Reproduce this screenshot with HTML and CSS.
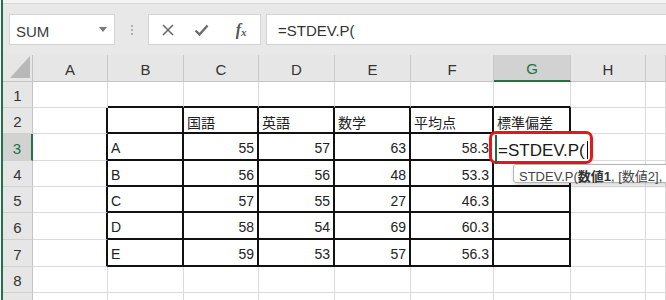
FILE: index.html
```html
<!DOCTYPE html>
<html lang="ja">
<head>
<meta charset="UTF-8">
<title>STDEV.P</title>
<link rel="stylesheet" href="styles.css">
</head>
<body>
<div class="app">
  <div class="ribbon-edge"></div>
  <div class="toolbar">
    <div class="namebox">
      <span>SUM</span>
      <svg class="drop" width="8" height="5" viewBox="0 0 8 5"><polygon points="0,0 8,0 4,5" fill="#7a7a7a"/></svg>
    </div>
    <div class="grip"><i></i><i></i><i></i></div>
    <div class="buttons">
      <span class="btn">
        <svg width="12" height="12" viewBox="0 0 12 12"><path d="M1 1 L11 11 M11 1 L1 11" stroke="#6b6b6b" stroke-width="1.6"/></svg>
      </span>
      <span class="btn">
        <svg width="15" height="12" viewBox="0 0 15 12"><path d="M1.5 6.5 L5.5 10.5 L13.5 1.5" stroke="#6b6b6b" stroke-width="2.4" fill="none"/></svg>
      </span>
      <span class="btn fx"><i>f</i><i class="sub">x</i></span>
    </div>
    <div class="formula">=STDEV.P(</div>
  </div>

  <div class="sheet">
    <div class="corner"><svg width="20" height="22" viewBox="0 0 20 22"><polygon points="20,0 20,22 0,22" fill="#b8b8b8"/></svg></div>
    <div class="ch">A</div><div class="ch">B</div><div class="ch">C</div><div class="ch">D</div><div class="ch">E</div><div class="ch">F</div><div class="ch sel">G</div><div class="ch">H</div><div class="ch"></div>

    <div class="rh">1</div>
    <div class="c"></div><div class="c tt"></div><div class="c tt"></div><div class="c tt"></div><div class="c tt"></div><div class="c tt"></div><div class="c tt"></div><div class="c"></div><div class="c"></div>

    <div class="rh">2</div>
    <div class="c tl"></div><div class="c tb"></div><div class="c tb">国語</div><div class="c tb">英語</div><div class="c tb">数学</div><div class="c tb">平均点</div><div class="c tb">標準偏差</div><div class="c"></div><div class="c"></div>

    <div class="rh sel">3</div>
    <div class="c tl"></div><div class="c tb">A</div><div class="c tb n">55</div><div class="c tb n">57</div><div class="c tb n">63</div><div class="c tb n">58.3</div><div class="c tb"></div><div class="c"></div><div class="c"></div>

    <div class="rh">4</div>
    <div class="c tl"></div><div class="c tb">B</div><div class="c tb n">56</div><div class="c tb n">56</div><div class="c tb n">48</div><div class="c tb n">53.3</div><div class="c tb"></div><div class="c"></div><div class="c"></div>

    <div class="rh">5</div>
    <div class="c tl"></div><div class="c tb">C</div><div class="c tb n">57</div><div class="c tb n">55</div><div class="c tb n">27</div><div class="c tb n">46.3</div><div class="c tb"></div><div class="c"></div><div class="c"></div>

    <div class="rh">6</div>
    <div class="c tl"></div><div class="c tb">D</div><div class="c tb n">58</div><div class="c tb n">54</div><div class="c tb n">69</div><div class="c tb n">60.3</div><div class="c tb"></div><div class="c"></div><div class="c"></div>

    <div class="rh">7</div>
    <div class="c tl"></div><div class="c tb">E</div><div class="c tb n">59</div><div class="c tb n">53</div><div class="c tb n">57</div><div class="c tb n">56.3</div><div class="c tb"></div><div class="c"></div><div class="c"></div>

    <div class="rh">8</div>
    <div class="c"></div><div class="c"></div><div class="c"></div><div class="c"></div><div class="c"></div><div class="c"></div><div class="c"></div><div class="c"></div><div class="c"></div>

    <div class="rh"></div>
    <div class="c"></div><div class="c"></div><div class="c"></div><div class="c"></div><div class="c"></div><div class="c"></div><div class="c"></div><div class="c"></div><div class="c"></div>

    <!-- cell being edited, with the red call-out round it -->
    <div class="mark">
      <div class="edit">=STDEV.P(<span class="caret"></span></div>
    </div>
    <div class="tip">STDEV.P(<b>数値1</b>, [数値2],</div>
  </div>
</div>
</body>
</html>
```

FILE: styles.css
```css
html, body {
    margin: 0;
    padding: 0;
    background: #ffffff;
}
body {
    font-family: "Liberation Sans", "Noto Sans CJK JP", sans-serif;
    color: #222;
    overflow: hidden;
}
.app {
    margin-left: 1px;
    border-left: 2px solid #217346;
    height: 300px;
    overflow: hidden;
    background: #e8e8e8;
}
.ribbon-edge {
    height: 3px;
    background: #f3f3f3;
    border-bottom: 1px solid #d6d6d6;
}

/* formula bar */
.toolbar {
    display: flex;
    align-items: stretch;
    height: 31px;
    padding: 10px 0 10px 6px;
}
.namebox {
    width: 106px;
    box-sizing: border-box;
    background: #fff;
    border: 1px solid #d4d4d4;
    display: flex;
    align-items: center;
    justify-content: space-between;
    padding: 3px 7px 0 6px;
    font-size: 15px;
    color: #3a3a3a;
}
.namebox .drop {
    margin-top: -4px;
}
.grip {
    width: 33px;
    display: flex;
    flex-direction: column;
    align-items: center;
    justify-content: center;
    gap: 2px;
}
.grip i {
    width: 2px;
    height: 2px;
    background: #b0b0b0;
}
.buttons {
    width: 113px;
    box-sizing: border-box;
    background: #fff;
    border: 1px solid #d4d4d4;
    display: flex;
    padding: 0 2px;
}
.btn {
    flex: 1;
    display: flex;
    align-items: center;
    justify-content: center;
}
.fx {
    font-family: "Liberation Serif", serif;
    color: #555;
    font-size: 16px;
    font-weight: bold;
    padding-left: 6px;
}
.fx .sub {
    font-size: 11px;
    margin-top: 5px;
}
.formula {
    flex: 1;
    margin-left: 5px;
    background: #fff;
    border: 1px solid #d4d4d4;
    border-right: none;
    display: flex;
    align-items: center;
    padding: 2px 0 0 11px;
    font-size: 15px;
    color: #333;
}

/* sheet grid */
.sheet {
    position: relative;
    display: grid;
    grid-template-columns: 30px 75px 76px 75px 76px 76px 83px 77px 75px 1fr;
    grid-template-rows: 27px 26px 26px 27px 26px 26px 27px 27px 26px 26px;
    background: #fff;
    font-size: 14px;
}
.corner {
    background: #e6e6e6;
    border-right: 1px solid #c4c4c4;
    border-bottom: 1px solid #c4c4c4;
    display: flex;
    align-items: flex-end;
    justify-content: flex-end;
    padding: 0 2px 3px 0;
}
.corner svg {
    display: block;
}
.ch {
    background: #e6e6e6;
    border-right: 1px solid #c9c9c9;
    border-bottom: 1px solid #c4c4c4;
    display: flex;
    align-items: center;
    justify-content: center;
    font-size: 15px;
    color: #333;
    padding-top: 2px;
}
.ch.sel {
    background: #d2d2d2;
    color: #217346;
    border-bottom: 2px solid #217346;
}
.rh {
    background: #e6e6e6;
    border-right: 1px solid #c4c4c4;
    border-bottom: 1px solid #d0d0d0;
    display: flex;
    align-items: center;
    justify-content: center;
    font-size: 15px;
    color: #333;
    padding-top: 2px;
}
.rh.sel {
    background: #d2d2d2;
    color: #217346;
    border-right: 2px solid #217346;
}
.ch, .rh, .c, .corner {
    box-sizing: border-box;
}
.c {
    border-right: 1px solid #dadada;
    border-bottom: 1px solid #dadada;
    display: flex;
    align-items: center;
    padding: 3px 3px 0 3px;
    white-space: nowrap;
}
.c.n {
    justify-content: flex-end;
}
.c.tt {
    border-bottom: 2px solid #111;
}
.c.tl {
    border-right: 2px solid #111;
}
.c.tb {
    border-right: 2px solid #111;
    border-bottom: 2px solid #111;
}

/* edited cell G3 */
.mark {
    position: absolute;
    left: 486px;
    top: 76px;
    width: 104px;
    height: 33px;
    box-sizing: border-box;
    border: 3px solid #e8161b;
    border-radius: 7px;
    background: #fff;
    padding: 1px 0 0 3px;
}
.edit {
    height: 27px;
    border-left: 2px solid #1d6b40;
    display: flex;
    align-items: center;
    padding: 2px 0 0 1px;
    font-size: 17px;
    color: #1a1a1a;
    white-space: nowrap;
}
.caret {
    display: inline-block;
    width: 1px;
    height: 18px;
    margin-left: 2px;
    margin-top: -2px;
    background: #000;
}
.tip {
    position: absolute;
    left: 510px;
    top: 109px;
    width: 170px;
    height: 19px;
    box-sizing: border-box;
    padding: 1px 0 0 5px;
    background: #fff;
    border: 1px solid #b4b4b4;
    border-radius: 3px;
    box-shadow: 1px 2px 4px rgba(0, 0, 0, 0.18);
    font-size: 13px;
    color: #444;
    white-space: nowrap;
}
.tip b {
    color: #333;
    font-weight: 600;
}
```
